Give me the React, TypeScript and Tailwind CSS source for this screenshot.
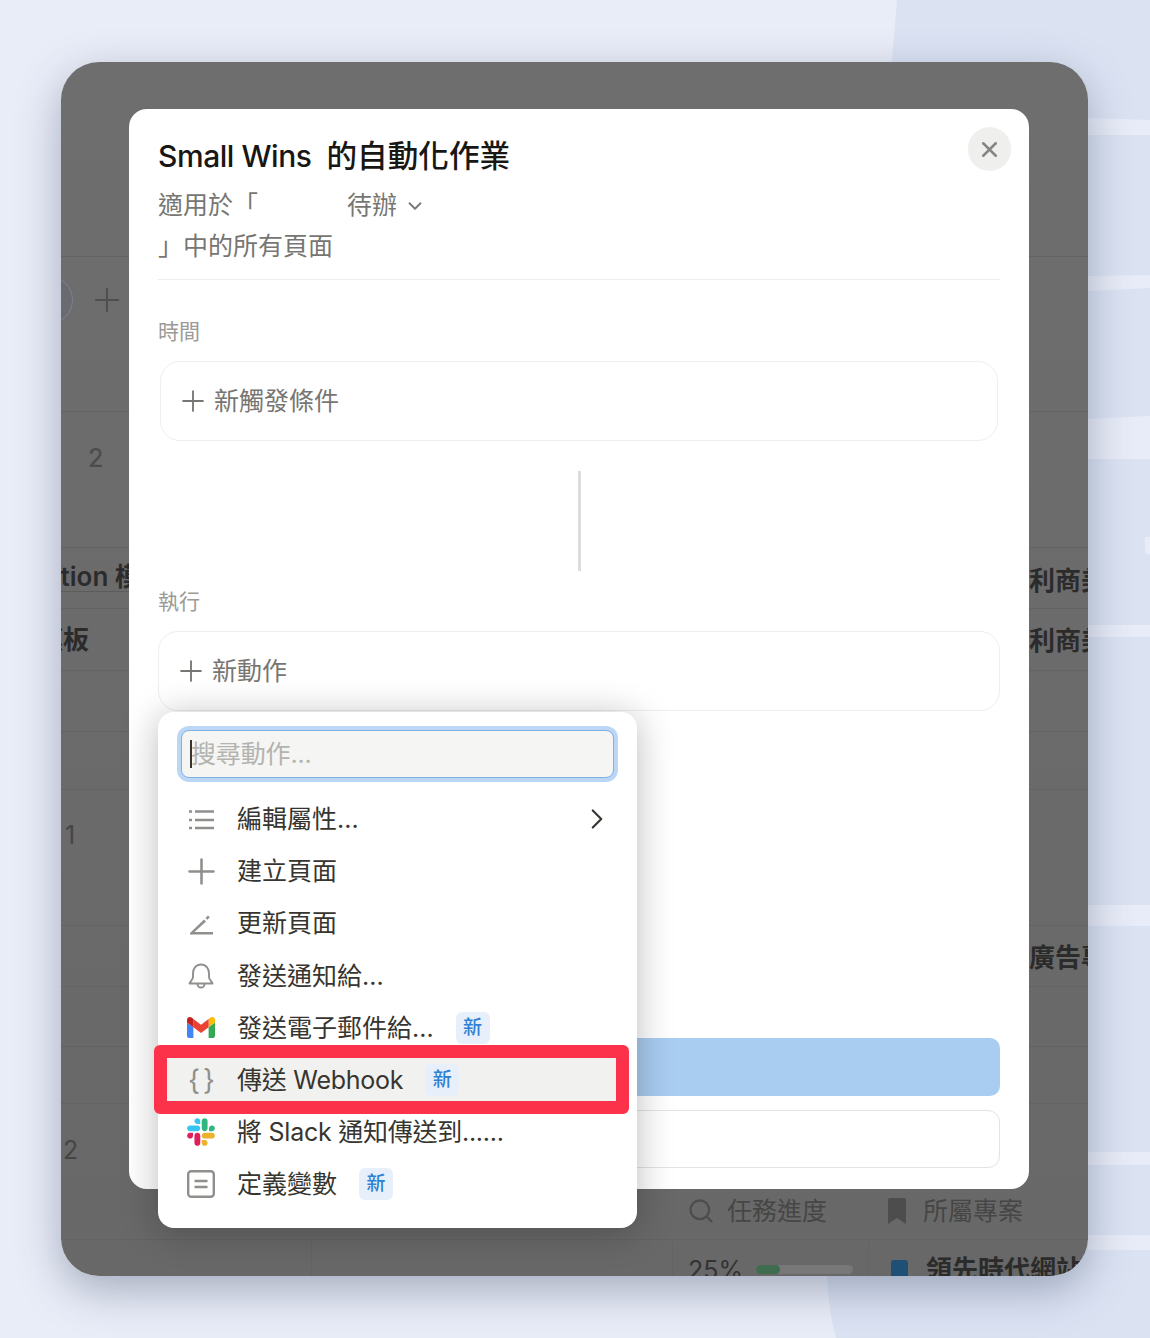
import React from "react";
import { ChevronDown, ChevronRight, Plus, Search, X } from "lucide-react";

function NewBadge() {
    return (
        <span className="ml-[22px] flex h-[32px] w-[34px] items-center justify-center rounded-[6px] bg-[#e7f0fa] text-[19px] font-medium text-[#2f80d3]">
            新
        </span>
    );
}

function ListIcon() {
    return (
        <svg viewBox="0 0 28 28" className="h-[28px] w-[28px] text-[#8f8f8c]" fill="none" stroke="currentColor" strokeWidth="2.3">
            <path d="M8 6.5h19M8 15h19M8 23h19" />
            <path d="M2 6.5h3M2 15h3M2 23h3" />
        </svg>
    );
}

function PenIcon() {
    return (
        <svg viewBox="0 0 28 28" className="h-[28px] w-[28px]">
            <path fill="#8f8f8c" d="M3 24L17 10.5l2 2L7.5 23H26v2.5H3z" />
            <path fill="#8f8f8c" d="M18.5 9l2.5-2.6 1.8 1.8-2.5 2.6z" />
        </svg>
    );
}

function BellIcon() {
    return (
        <svg viewBox="0 0 28 28" className="h-[28px] w-[28px] text-[#8f8f8c]" fill="none" stroke="currentColor" strokeWidth="1.9" strokeLinejoin="round">
            <path d="M14 2.5c-5 0-8 4-8 9v3.5c0 3-3 4.5-3.5 6.5h23c-.5-2-3.5-3.5-3.5-6.5v-3.5c0-5-3-9-8-9z" />
            <path d="M10.5 22a3.5 3.5 0 0 0 7 0" />
        </svg>
    );
}

function GmailIcon() {
    return (
        <svg viewBox="52 42 88 66" className="h-[21px] w-[28px]">
            <path fill="#4285f4" d="M58 108h14V74L52 59v43c0 3.32 2.69 6 6 6" />
            <path fill="#34a853" d="M120 108h14c3.32 0 6-2.69 6-6V59l-20 15" />
            <path fill="#fbbc04" d="M120 48v26l20-15v-8c0-7.42-8.47-11.65-14.4-7.2" />
            <path fill="#ea4335" d="M72 74V48l24 18 24-18v26L96 92" />
            <path fill="#c5221f" d="M52 51v8l20 15V48l-5.6-4.2c-5.94-4.45-14.4-.22-14.4 7.2" />
        </svg>
    );
}

function SlackIcon() {
    return (
        <svg viewBox="0 0 127 127" className="h-[28px] w-[28px]">
            <path fill="#E01E5A" d="M27.2 80c0 7.3-5.9 13.2-13.2 13.2C6.7 93.2.8 87.3.8 80c0-7.3 5.9-13.2 13.2-13.2h13.2V80zm6.6 0c0-7.3 5.9-13.2 13.2-13.2 7.3 0 13.2 5.9 13.2 13.2v33c0 7.3-5.9 13.2-13.2 13.2-7.3 0-13.2-5.9-13.2-13.2V80z" />
            <path fill="#36C5F0" d="M47 27c-7.3 0-13.2-5.9-13.2-13.2C33.8 6.5 39.7.6 47 .6c7.3 0 13.2 5.9 13.2 13.2V27H47zm0 6.7c7.3 0 13.2 5.9 13.2 13.2 0 7.3-5.9 13.2-13.2 13.2H13.9C6.6 60.1.7 54.2.7 46.9c0-7.3 5.9-13.2 13.2-13.2H47z" />
            <path fill="#2EB67D" d="M99.9 46.9c0-7.3 5.9-13.2 13.2-13.2 7.3 0 13.2 5.9 13.2 13.2 0 7.3-5.9 13.2-13.2 13.2H99.9V46.9zm-6.6 0c0 7.3-5.9 13.2-13.2 13.2-7.3 0-13.2-5.9-13.2-13.2V13.8C66.9 6.5 72.8.6 80.1.6c7.3 0 13.2 5.9 13.2 13.2v33.1z" />
            <path fill="#ECB22E" d="M80.1 99.8c7.3 0 13.2 5.9 13.2 13.2 0 7.3-5.9 13.2-13.2 13.2-7.3 0-13.2-5.9-13.2-13.2V99.8h13.2zm0-6.6c-7.3 0-13.2-5.9-13.2-13.2 0-7.3 5.9-13.2 13.2-13.2h33.1c7.3 0 13.2 5.9 13.2 13.2 0 7.3-5.9 13.2-13.2 13.2H80.1z" />
        </svg>
    );
}

function VariableIcon() {
    return (
        <svg viewBox="0 0 28 28" className="h-[28px] w-[28px] text-[#8f8f8c]" fill="none" stroke="currentColor" strokeWidth="2.4">
            <rect x="1.2" y="1.2" width="25.6" height="25.6" rx="3" />
            <path d="M7.5 11h13M7.5 17h13" />
        </svg>
    );
}

function MenuRow({ icon, label, badge, chevron, active, tight }: { icon: React.ReactNode; label: string; badge?: boolean; chevron?: boolean; active?: boolean; tight?: boolean }) {
    return (
        <div className={active ? "relative ml-[9px] mr-[21px] flex h-[52.2px] items-center bg-[#f1f1ef] pl-[20px] pr-[2px]" : "relative ml-[9px] mr-[21px] flex h-[52.2px] items-center pl-[20px] pr-[2px]"}>
            <span className="flex w-[28px] shrink-0 items-center justify-center">{icon}</span>
            <span className={tight ? "ml-[22px] whitespace-nowrap text-[25px] leading-[32px] tracking-[-0.25px] text-[#37352f]" : "ml-[22px] whitespace-nowrap text-[25px] leading-[32px] text-[#37352f]"}>{label}</span>
            {badge && <NewBadge />}
            {chevron && <ChevronRight className="ml-auto h-[34px] w-[34px] text-[#37352f]" strokeWidth={1.5} />}
            {active && <div className="absolute -inset-x-[13px] -bottom-[8px] -top-[9px] rounded-[6px] border-[13px] border-[#fb3249]" />}
        </div>
    );
}

function ActionMenu() {
    return (
        <div className="absolute left-[29px] top-[603px] h-[516px] w-[479px] rounded-[16px] bg-white pt-[18px] shadow-[0_4px_36px_rgba(15,15,15,0.28)]">
            <div className="mx-[23px] flex h-[48px] items-center rounded-[8px] border-[1.5px] border-[#7fb0e6] bg-[#f5f5f3] pl-[8px] shadow-[0_0_0_4px_#bcd7f5]">
                <span className="h-[28px] w-[2px] shrink-0 bg-[#37352f]" />
                <span className="-ml-[1px] pt-[2px] text-[25px] tracking-[-0.15px] text-[#b3b3b0]">搜尋動作...</span>
            </div>
            <div className="mt-[15px]">
                <MenuRow icon={<ListIcon />} label="編輯屬性..." chevron />
                <MenuRow icon={<Plus className="h-[41px] w-[41px] shrink-0 text-[#8f8f8c]" strokeWidth={1.5} />} label="建立頁面" />
                <MenuRow icon={<PenIcon />} label="更新頁面" />
                <MenuRow icon={<BellIcon />} label="發送通知給..." />
                <MenuRow icon={<GmailIcon />} label="發送電子郵件給..." badge />
                <MenuRow icon={<span className="ml-[4px] whitespace-nowrap text-[28px] leading-[28px] tracking-[3px] text-[#8f8f8c]">{"{}"}</span>} label="傳送 Webhook" badge active tight />
                <MenuRow icon={<SlackIcon />} label="將 Slack 通知傳送到......" tight />
                <MenuRow icon={<VariableIcon />} label="定義變數" badge />
            </div>
        </div>
    );
}

function AutomationModal() {
    return (
        <div className="absolute left-[68px] top-[47px] h-[1080px] w-[900px] rounded-[18px] bg-white px-[29px] pt-[27px]">
            <button className="absolute right-[18px] top-[18px] flex h-[44px] w-[43px] items-center justify-center rounded-full bg-[#efefee]">
                <X className="h-[25px] w-[25px] text-[#858583]" strokeWidth={2.4} />
            </button>
            <h1 className="flex h-[40px] items-center whitespace-nowrap text-[30px] font-medium leading-[40px] text-[#191713]">
                <span className="tracking-[-0.45px]">Small Wins</span>
                <span className="ml-[15px] text-[30.6px]">的自動化作業</span>
            </h1>
            <div className="mt-[9px] flex h-[41px] items-center text-[25px] text-[#777672]">
                <span className="w-[189px]">適用於「</span>
                <span>待辦</span>
                <ChevronDown className="ml-[7px] h-[22px] w-[22px]" strokeWidth={2} />
            </div>
            <div className="h-[41px] text-[25px] leading-[41px] text-[#777672]">」中的所有頁面</div>
            <div className="mt-[12px] h-px bg-[#ededec]" />
            <div className="mt-[38px] text-[21px] leading-[28px] text-[#9b9a97]">時間</div>
            <div className="mx-[2px] mt-[15px] flex h-[80px] items-center rounded-[20px] border border-[#eeeeed] pl-[15px] text-[25px] text-[#777672]">
                <Plus className="h-[34px] w-[34px] shrink-0" strokeWidth={1.3} />
                <span className="ml-[4px] pt-[2px]">新觸發條件</span>
            </div>
            <div className="mx-auto mt-[30px] h-[100px] w-[3px] bg-[#dcdcdb]" />
            <div className="mt-[17px] text-[21px] leading-[28px] text-[#9b9a97]">執行</div>
            <div className="mt-[15px] flex h-[80px] items-center rounded-[20px] border border-[#eeeeed] pl-[15px] text-[25px] text-[#777672]">
                <Plus className="h-[34px] w-[34px] shrink-0" strokeWidth={1.3} />
                <span className="ml-[4px] pt-[2px]">新動作</span>
            </div>
            <div className="mt-[327px] h-[58px] rounded-[10px] bg-[#a9ccf1]" />
            <div className="mt-[14px] h-[58px] rounded-[12px] border border-[#e3e3e2]" />
            <ActionMenu />
        </div>
    );
}

function BackdropTable() {
    const strong = "whitespace-nowrap text-[26px] font-semibold leading-[34px] text-[#2b2b2b]";
    return (
        <div className="flex flex-col">
            <div className="h-[195px] border-b border-[#636363]" />
            <div className="flex h-[155px] items-start border-b border-[#636363] pt-[19px]">
                <div className="-ml-[36px] h-[48px] w-[48px] shrink-0 rounded-full border border-[#7d8190] bg-[#6a6b70]" />
                <Plus className="ml-[15px] mt-[5px] h-[38px] w-[38px] shrink-0 text-[#4f4f4f]" strokeWidth={1.3} />
            </div>
            <div className="h-[136px] border-b border-[#636363] pl-[27px] pt-[29px] text-[25px] font-medium leading-[34px] text-[#4c4c4c]">2</div>
            <div className="flex h-[61px] items-start justify-between overflow-hidden border-b border-[#636363] pt-[15px]">
                <span className="-ml-[36px] whitespace-nowrap border-b border-[#5c5c5c] text-[26px] font-semibold leading-[28px] text-[#2b2b2b]">Notion 模板</span>
                <span className={"mt-[1px] w-[59px] overflow-hidden " + strong}>利商美</span>
            </div>
            <div className="flex h-[62px] justify-between overflow-hidden border-b border-[#636363] pt-[14px]">
                <span className={"-ml-[24px] " + strong}>模板</span>
                <span className={"mt-[1px] w-[59px] overflow-hidden " + strong}>利商美</span>
            </div>
            <div className="h-[61px] border-b border-[#636363]" />
            <div className="h-[58px] border-b border-[#636363]" />
            <div className="h-[136px] border-b border-[#636363] pl-[4px] pt-[28px] text-[25px] leading-[34px] text-[#454545]">1</div>
            <div className="flex h-[61px] justify-end overflow-hidden border-b border-[#636363] pt-[15px]">
                <span className={"w-[59px] overflow-hidden " + strong}>廣告專</span>
            </div>
            <div className="h-[60px] border-b border-[#636363]" />
            <div className="h-[57px] border-b border-[#636363]" />
            <div className="flex h-[136px] items-start border-b border-[#636363]">
                <div className="w-[628px] pl-[2px] pt-[29px] text-[25px] leading-[34px] text-[#454545]">2</div>
                <div className="flex w-[199px] items-center pt-[90px] text-[25px] leading-[34px] text-[#464646]">
                    <Search className="-ml-[2px] h-[28px] w-[28px] text-[#4d4d4d]" strokeWidth={2} />
                    <span className="ml-[12px]">任務進度</span>
                </div>
                <div className="flex items-center whitespace-nowrap pt-[90px] text-[25px] leading-[34px] text-[#464646]">
                    <svg viewBox="0 0 18 26" className="h-[26px] w-[18px] fill-[#4d4d4d]">
                        <path d="M0 2a2 2 0 0 1 2-2h14a2 2 0 0 1 2 2v24l-9-6-9 6z" />
                    </svg>
                    <span className="ml-[17px]">所屬專案</span>
                </div>
            </div>
            <div className="flex h-[36px] overflow-hidden">
                <div className="w-[251px] border-r border-[#636363]" />
                <div className="w-[361px] border-r border-[#636363]" />
                <div className="flex w-[196px] items-start border-r border-[#636363] pl-[15px] pt-[13px]">
                    <span className="text-[25px] leading-[34px] text-[#333333]">25%</span>
                    <div className="ml-[13px] mt-[12px] h-[9px] w-[97px] rounded-full bg-[#787878]">
                        <div className="h-[9px] w-[24px] rounded-full bg-[#3f6b4f]" />
                    </div>
                </div>
                <div className="flex items-start whitespace-nowrap pl-[22px] pt-[13px]">
                    <div className="mt-[7px] h-[26px] w-[17px] rounded-[3px] bg-[#1e4f74]" />
                    <span className={"ml-[18px] " + strong}>領先時代網站</span>
                </div>
            </div>
        </div>
    );
}

function PageBackdrop() {
    return (
        <svg viewBox="0 0 1150 1338" className="absolute inset-0 h-[1338px] w-[1150px]">
            <path fill="#dbe3f3" d="M897 0L880 200V1276H827Q828 1310 836 1338H1150V0z" />
            <path fill="#e8ecf8" d="M1088 118L1150 120V135L1088 135zM1088 276L1150 275V288L1088 291zM1088 419L1150 416V459L1088 459zM1088 625H1150V637H1088zM1088 905H1150V926H1088zM1088 1152H1150V1165H1088zM1088 1235H1150V1250H1088zM1145 537H1150V554H1145z" />
        </svg>
    );
}

export default function App() {
    return (
        <div className="relative h-[1338px] w-[1150px] overflow-hidden bg-[#e9edf8] pl-[61px] pt-[62px] font-['Inter','Noto_Sans_CJK_TC',sans-serif]">
            <PageBackdrop />
            <div className="relative h-[1214px] w-[1027px] rounded-[38px] bg-gradient-to-b from-[#6e6e6e] to-[#686868] shadow-[0_14px_44px_rgba(55,65,95,0.38)]">
                <div className="h-full overflow-hidden rounded-[38px]">
                    <BackdropTable />
                </div>
                <AutomationModal />
            </div>
        </div>
    );
}
